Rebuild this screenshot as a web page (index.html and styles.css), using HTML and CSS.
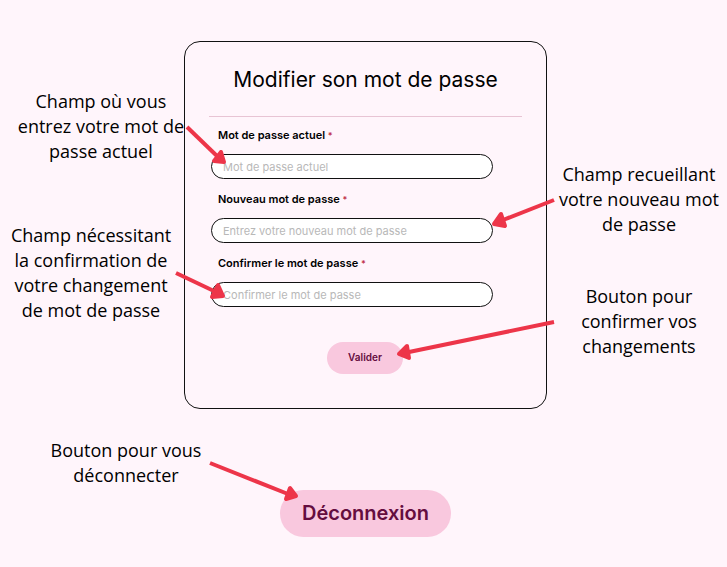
FILE: index.html
```html
<!DOCTYPE html>
<html lang="fr">
<head>
  <meta charset="utf-8">
  <meta name="viewport" content="width=device-width, initial-scale=1">
  <title>Modifier son mot de passe</title>
  <link rel="stylesheet" href="styles.css">
</head>
<body>
  <main class="guide">
    <aside class="notes notes-left">
      <p class="note note-current">Champ où vous<br>entrez votre mot de<br>passe actuel</p>
      <p class="note note-confirm">Champ nécessitant<br>la confirmation de<br>votre changement<br>de mot de passe</p>
    </aside>

    <section class="card">
      <h1 class="title">Modifier son mot de passe</h1>
      <form class="form">
        <div class="field">
          <label for="current">Mot de passe actuel <span class="required">*</span></label>
          <div class="anchor">
            <input id="current" type="password" placeholder="Mot de passe actuel">
            <svg class="arrow" aria-hidden="true"><path class="shaft" d="M-24-27 6 2"/><path class="head" d="M13 8 10-2 3 7Z"/></svg>
          </div>
        </div>
        <div class="field">
          <label for="new">Nouveau mot de passe <span class="required">*</span></label>
          <div class="anchor">
            <input id="new" type="password" placeholder="Entrez votre nouveau mot de passe">
            <svg class="arrow arrow-right" aria-hidden="true"><path class="shaft" d="M61-18 10 2"/><path class="head" d="M1 6 8-4 12 8Z"/></svg>
          </div>
        </div>
        <div class="field">
          <label for="confirm">Confirmer le mot de passe <span class="required">*</span></label>
          <div class="anchor">
            <input id="confirm" type="password" placeholder="Confirmer le mot de passe">
            <svg class="arrow" aria-hidden="true"><path class="shaft" d="M-35-9 5 10"/><path class="head" d="M12 14 7 3 1 15Z"/></svg>
          </div>
        </div>
        <div class="anchor submit">
          <button class="button" type="submit">Valider</button>
          <svg class="arrow arrow-right" aria-hidden="true"><path class="shaft" d="M151-20 6 10"/><path class="head" d="M-4 12 4 4 6 16Z"/></svg>
        </div>
      </form>
    </section>

    <aside class="notes notes-right">
      <p class="note note-new">Champ recueillant<br>votre nouveau mot<br>de passe</p>
      <p class="note note-submit">Bouton pour<br>confirmer vos<br>changements</p>
    </aside>
  </main>

  <footer class="session">
    <p class="note">Bouton pour vous<br>déconnecter</p>
    <div class="anchor logout">
      <button class="button button-large" type="button">Déconnexion</button>
      <svg class="arrow" aria-hidden="true"><path class="shaft" d="M-70-27 8 4"/><path class="head" d="M16 6 10-2 6 9Z"/></svg>
    </div>
  </footer>
</body>
</html>
```
FILE: styles.css
```css
* {
  box-sizing: border-box;
}

body {
  margin: 0;
  background: #fff5fb;
  color: #000;
  font-family: Inter, "Liberation Sans", sans-serif;
}

.guide {
  display: grid;
  grid-template-columns: 1fr 363px 1fr;
  padding: 41px 0 0 4px;
}

.notes {
  display: flex;
  flex-direction: column;
  align-items: center;
}

.notes-left {
  padding: 48px 0 0;
}

.notes-right {
  padding: 121px 0 0 4px;
}

.note {
  margin: 0;
  font-family: "Open Sans", "Noto Sans", sans-serif;
  font-size: 18px;
  line-height: 25px;
  text-align: center;
  white-space: nowrap;
}

.note-current {
  align-self: flex-end;
}

.note-confirm {
  margin-top: 59px;
  padding-right: 6px;
}

.note-submit {
  margin-top: 47px;
}

.card {
  padding: 24px 24px 34px;
  border: 1px solid #111;
  border-radius: 16px;
}

.title {
  margin: 0;
  padding-bottom: 22px;
  border-bottom: 1px solid #e8c4d4;
  font-size: 21px;
  font-weight: 400;
  line-height: 28px;
  text-align: center;
  white-space: nowrap;
}

.form {
  display: flex;
  flex-direction: column;
  gap: 12px;
  padding: 10px 29px 0 2px;
}

.field {
  display: flex;
  flex-direction: column;
  gap: 11px;
}

.field label {
  padding-left: 7px;
  font-size: 11px;
  font-weight: 600;
  line-height: 16px;
}

.required {
  color: #c0304a;
  font-size: 9px;
  line-height: 1;
}

.anchor {
  position: relative;
}

.field input {
  display: block;
  width: 100%;
  height: 25px;
  padding: 0 11px;
  border: 1px solid #111;
  border-radius: 13px;
  background: #fff;
  font: 400 11px/16px Inter, "Liberation Sans", sans-serif;
}

.field input::placeholder {
  color: #b8b8b8;
  opacity: 1;
}

.submit {
  align-self: center;
  margin: 23px 0 0 26px;
}

.button {
  display: block;
  padding: 8px 21px 10px;
  border: 0;
  border-radius: 24px;
  background: #f9c8de;
  color: #650d3f;
  font: 600 10px/14px Inter, "Liberation Sans", sans-serif;
}

.button-large {
  padding: 9px 22px 10px;
  font-size: 20px;
  line-height: 28px;
}

.arrow {
  position: absolute;
  top: 0;
  left: 0;
  width: 1px;
  height: 1px;
  overflow: visible;
  pointer-events: none;
}

.arrow-right {
  left: 100%;
}

.shaft {
  fill: none;
  stroke: #ed3549;
  stroke-width: 4;
}

.head {
  fill: #ed3549;
  stroke: #ed3549;
  stroke-width: 4;
  stroke-linejoin: round;
}

.session {
  display: grid;
  grid-template-columns: 1fr auto 1fr;
  padding: 29px 0 30px 4px;
}

.session .note {
  padding-right: 32px;
}

.logout {
  margin-top: 52px;
}
```
